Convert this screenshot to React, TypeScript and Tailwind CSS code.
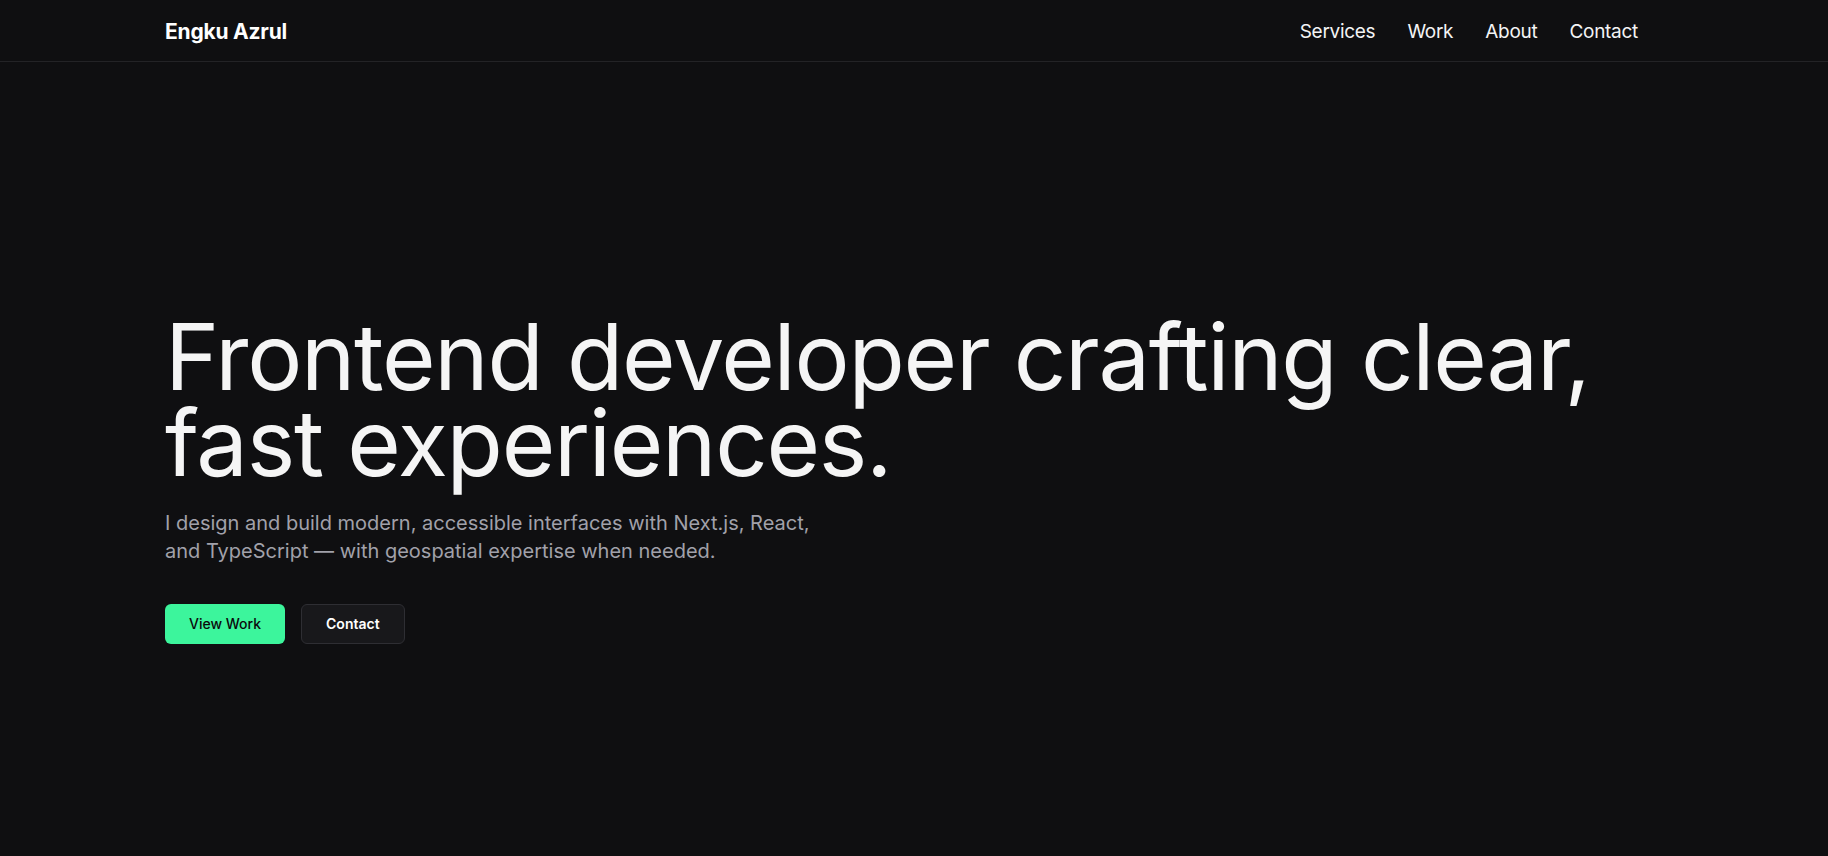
import { useState } from 'react'

const navLinks = ['Services', 'Work', 'About', 'Contact']

function Header() {
  return (
    <header className="border-b border-[#232326]">
      <div className="flex h-[61px] items-center justify-between pl-[165px] pr-[190px] pt-[3px]">
        <a href="#" className="text-[21px] font-bold tracking-[-0.01em] text-white">
          Engku Azrul
        </a>
        <nav className="flex items-center gap-8">
          {navLinks.map((link) => (
            <a key={link} href="#" className="text-[19px] tracking-[-0.015em] text-[#f4f4f5]">
              {link}
            </a>
          ))}
        </nav>
      </div>
    </header>
  )
}

function Hero() {
  const [hovered, setHovered] = useState<string | null>(null)

  return (
    <section className="pl-[165px] pr-[190px] pt-[252px] pb-[200px]">
      <h1 className="text-[92px] font-normal leading-[86px] tracking-[-0.014em] text-[#f5f5f5]">
        Frontend developer crafting clear,
        <br />
        fast experiences.
      </h1>
      <p className="mt-[23px] max-w-[680px] font-['Inter'] text-[20px] leading-[28px] text-[#a1a1aa]">
        I design and build modern, accessible interfaces with Next.js, React, and TypeScript — with
        geospatial expertise when needed.
      </p>
      <div className="mt-[39px] flex items-center gap-4">
        <a
          href="#"
          onMouseEnter={() => setHovered('work')}
          onMouseLeave={() => setHovered(null)}
          className={`flex h-10 items-center rounded-md px-6 font-['Inter'] text-sm font-medium text-[#0b0b0c] ${
            hovered === 'work' ? 'bg-[#2fe090]' : 'bg-[#3cf59c]'
          }`}
        >
          View Work
        </a>
        <a
          href="#"
          className="flex h-10 items-center rounded-md border border-[#2e2e33] bg-[#18181b] px-6 font-['Inter'] text-sm font-semibold text-white"
        >
          Contact
        </a>
      </div>
    </section>
  )
}

export default function App() {
  return (
    <div className="min-h-screen bg-[#0f0f11] font-['Inter',sans-serif] antialiased">
      <Header />
      <Hero />
    </div>
  )
}
